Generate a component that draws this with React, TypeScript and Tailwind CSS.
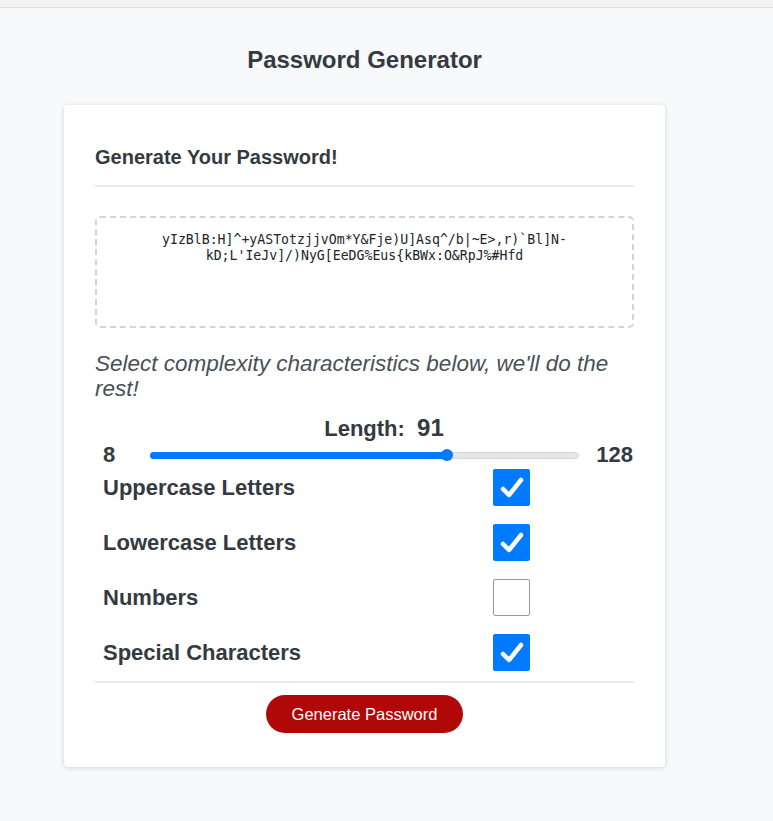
import { useState } from "react"

const FONT = "font-['Liberation_Sans',Arial,sans-serif]"

const options = [
  { key: "upper", label: "Uppercase Letters" },
  { key: "lower", label: "Lowercase Letters" },
  { key: "numbers", label: "Numbers" },
  { key: "special", label: "Special Characters" },
]

function Check({ checked, onClick }: { checked: boolean; onClick: () => void }) {
  return (
    <button
      onClick={onClick}
      className={
        checked
          ? "w-[37px] h-[37px] rounded-[2px] bg-[#007bff] flex items-center justify-center"
          : "w-[37px] h-[37px] rounded-[2px] bg-white border border-[#9a9a9a]"
      }
    >
      {checked && (
        <svg width="26" height="26" viewBox="0 0 26 26">
          <path d="M4 14 L10 20 L22 5" fill="none" stroke="white" strokeWidth="4.5" strokeLinecap="round" strokeLinejoin="round" />
        </svg>
      )}
    </button>
  )
}

export default function App() {
  const [length, setLength] = useState(91)
  const [flags, setFlags] = useState<Record<string, boolean>>({
    upper: true,
    lower: true,
    numbers: false,
    special: true,
  })
  const pct = ((length - 8) / 120) * 100

  return (
    <div className={`min-h-[821px] bg-[#f8f9fa] ${FONT} text-[#343a40]`}>
      <div className="h-[8px] bg-[#f3f3f3] border-b border-[#dedede]" />
      <div className="w-[729px] flex flex-col items-center">
        <h1 className="mt-[37px] text-[24px] font-bold leading-[30px]">Password Generator</h1>

        <div className="mt-[30px] w-[601px] bg-white rounded-[4px] shadow-[0_1px_5px_rgba(0,0,0,0.15)] px-[31px] pt-[40px] pb-[34px]">
          <h2 className="text-[20px] font-bold leading-[24px]">Generate Your Password!</h2>
          <div className="mt-[16px] border-t-2 border-[#e9ecef]" />

          <div className="mt-[29px] h-[112px] border-2 border-dashed border-[#ced4da] rounded-[5px] px-[40px] pt-[14px] text-center font-['DejaVu_Sans_Mono',monospace] text-[13.2px] leading-[16px] text-[#212529] break-words">
            yIzBlB:H]^+yASTotzjjvOm*Y&amp;Fje)U]Asq^/b|~E&gt;,r)`Bl]N-kD;L'IeJv]/)NyG[EeDG%Eus{"{"}kBWx:O&amp;RpJ%#Hfd
          </div>

          <p className="mt-[23px] text-[22.5px] italic leading-[25px] text-[#495057]">
            Select complexity characteristics below, we'll do the rest!
          </p>

          <div className="mt-[14px] pl-[8px] pr-[1px]">
            <div className="text-center text-[22px] font-bold leading-[26px] pl-[32px]">
              Length:&nbsp;&nbsp;<span className="text-[24px]">{length}</span>
            </div>
            <div className="flex items-center gap-[17px] text-[22px] font-bold leading-[26px]">
              <span className="w-[30px]">8</span>
              <div className="relative flex-1 h-[14px] flex items-center">
                <div className="w-full h-[7px] rounded-full bg-[#e6e6e6] border border-[#d6d6d6]" />
                <div className="absolute left-0 h-[7px] rounded-full bg-[#007bff]" style={{ width: `${pct}%` }} />
                <input
                  type="range"
                  min={8}
                  max={128}
                  value={length}
                  onChange={(e) => setLength(Number(e.target.value))}
                  className="absolute inset-0 w-full opacity-0 cursor-pointer"
                />
                <div
                  className="absolute w-[12px] h-[12px] -ml-[6px] rounded-full bg-[#007bff] pointer-events-none"
                  style={{ left: `${pct}%` }}
                />
              </div>
              <span>128</span>
            </div>

            <div className="mt-[1px] flex flex-col gap-[18px]">
              {options.map((o) => (
                <div key={o.key} className="flex items-center justify-between pr-[103px]">
                  <span className="text-[22px] font-bold leading-[26px]">{o.label}</span>
                  <Check
                    checked={flags[o.key]}
                    onClick={() => setFlags({ ...flags, [o.key]: !flags[o.key] })}
                  />
                </div>
              ))}
            </div>
          </div>

          <div className="mt-[10px] border-t-2 border-[#e9ecef]" />
          <div className="mt-[12px] flex justify-center">
            <button className="w-[197px] h-[38px] rounded-full bg-[#b00808] text-white text-[16.5px] leading-[20px]">
              Generate Password
            </button>
          </div>
        </div>
      </div>
    </div>
  )
}
